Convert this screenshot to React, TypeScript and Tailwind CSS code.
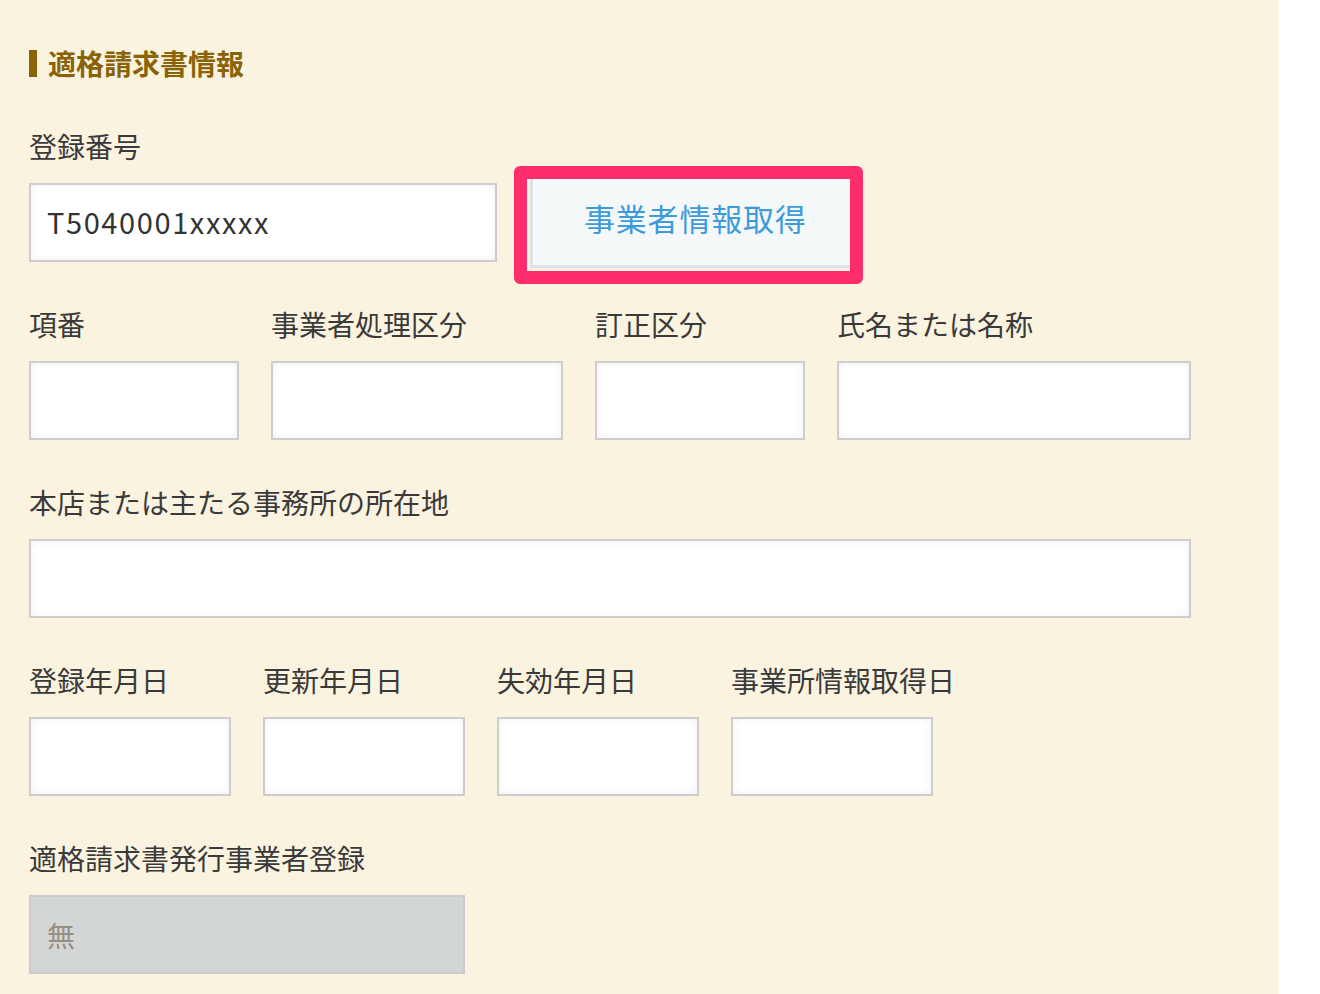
import React from 'react'

const font = { fontFamily: '"Noto Sans CJK JP", "Noto Sans", sans-serif' }

function Label({ children }: { children: React.ReactNode }) {
  return <div className="h-[40px] leading-[40px] text-[28px] text-[#3a3a3a] mb-[17px] whitespace-nowrap">{children}</div>
}

function Field({ className = '', value = '', disabled = false }: { className?: string; value?: string; disabled?: boolean }) {
  return (
    <div
      className={`h-[79px] shrink-0 border-2 flex items-center px-[16px] text-[28px] ${
        disabled
          ? 'bg-[#d3d6d7] border-[#c9cbcc] text-[#978f7f]'
          : 'bg-white border-[#cdcdcd] text-[#333] shadow-[inset_0_0_8px_rgba(0,0,0,0.06)]'
      } ${className}`}
    >
      {value}
    </div>
  )
}

function Group({ label, className, value, disabled }: { label: string; className: string; value?: string; disabled?: boolean }) {
  return (
    <div className="flex flex-col">
      <Label>{label}</Label>
      <Field className={className} value={value} disabled={disabled} />
    </div>
  )
}

export default function App() {
  return (
    <div className="w-[1320px] h-[994px] bg-white overflow-hidden" style={font}>
      <div className="w-[1279px] h-[994px] bg-[#faf3e0] pl-[29px] pt-[50px]">
        {/* section title */}
        <div className="flex items-center h-[27px]">
          <div className="w-[8px] h-[27px] bg-[#8a6307]" />
          <h2 className="ml-[11px] text-[28px] font-bold text-[#8a6307] leading-none -mt-[2px]">適格請求書情報</h2>
        </div>

        <div className="mt-[49px] flex flex-col gap-[42px]">
          {/* registration number */}
          <div className="flex flex-col">
            <Label>登録番号</Label>
            <div className="flex items-start h-[79px]">
              <div className="h-[79px] w-[468px] shrink-0 border-2 border-[#cdcdcd] bg-white shadow-[inset_0_0_8px_rgba(0,0,0,0.06)] flex items-center px-[16px] pb-[2px] text-[29px] tracking-[1.6px] text-[#333]">
                T5040001xxxxx
              </div>
              {/* highlighted button */}
              <div className="ml-[17px] -mt-[17px] border-[13px] border-[#ff2d6b] rounded-[6px] w-[349px] h-[118px] shrink-0 pl-[3px] overflow-hidden">
                <button className="w-[330px] h-[89px] bg-[#f5f8f9] border-l-[3px] border-b-[3px] border-[#dbe3e8] text-[31px] tracking-[0.8px] text-[#3d9bdc] pl-[51px] text-left leading-none pb-[9px]">
                  事業者情報取得
                </button>
              </div>
            </div>
          </div>

          <div className="flex gap-[32px]">
            <Group label="項番" className="w-[210px]" />
            <Group label="事業者処理区分" className="w-[292px]" />
            <Group label="訂正区分" className="w-[210px]" />
            <Group label="氏名または名称" className="w-[354px]" />
          </div>

          <Group label="本店または主たる事務所の所在地" className="w-[1162px]" />

          <div className="flex gap-[32px]">
            <Group label="登録年月日" className="w-[202px]" />
            <Group label="更新年月日" className="w-[202px]" />
            <Group label="失効年月日" className="w-[202px]" />
            <Group label="事業所情報取得日" className="w-[202px]" />
          </div>

          <Group label="適格請求書発行事業者登録" className="w-[436px]" value="無" disabled />
        </div>
      </div>
    </div>
  )
}
